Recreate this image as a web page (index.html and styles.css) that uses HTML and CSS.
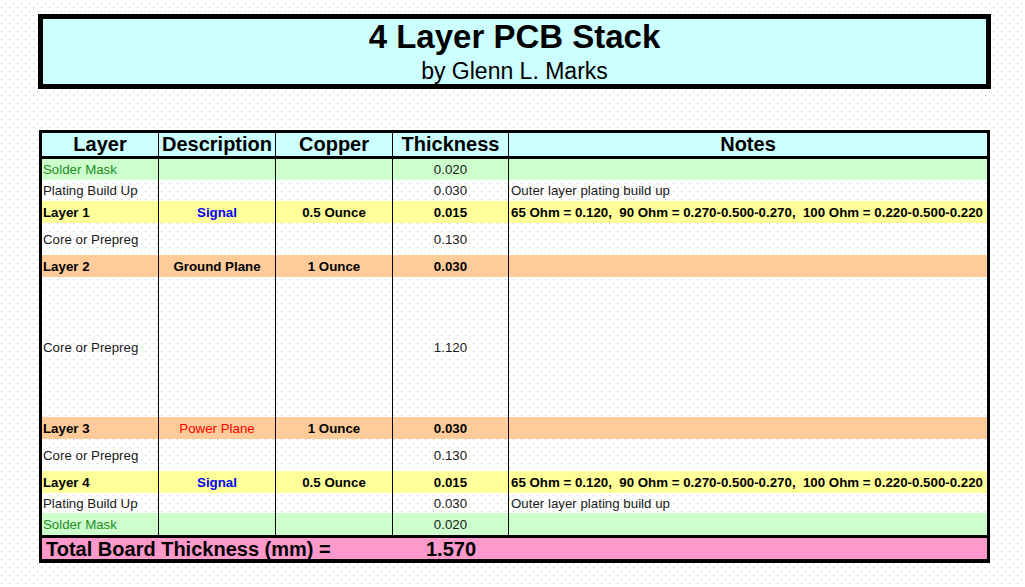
FILE: index.html
```html
<!DOCTYPE html>
<html lang="en">
<head>
<meta charset="utf-8">
<title>4 Layer PCB Stack</title>
<link rel="stylesheet" href="styles.css">
</head>
<body>
<div class="title-box">
  <h1 class="title">4 Layer PCB Stack</h1>
  <p class="subtitle">by Glenn L. Marks</p>
</div>

<div class="stack">
  <div class="row head">
    <div class="cell c">Layer</div>
    <div class="cell c">Description</div>
    <div class="cell c">Copper</div>
    <div class="cell c">Thickness</div>
    <div class="cell c last">Notes</div>
  </div>

  <div class="row green h21">
    <div class="cell mask">Solder Mask</div>
    <div class="cell"></div>
    <div class="cell"></div>
    <div class="cell c">0.020</div>
    <div class="cell last"></div>
  </div>

  <div class="row h21">
    <div class="cell">Plating Build Up</div>
    <div class="cell"></div>
    <div class="cell"></div>
    <div class="cell c">0.030</div>
    <div class="cell last note">Outer layer plating build up</div>
  </div>

  <div class="row yellow h22 bold">
    <div class="cell">Layer 1</div>
    <div class="cell c blue">Signal</div>
    <div class="cell c">0.5 Ounce</div>
    <div class="cell c">0.015</div>
    <div class="cell last note">65 Ohm = 0.120,  90 Ohm = 0.270-0.500-0.270,  100 Ohm = 0.220-0.500-0.220</div>
  </div>

  <div class="row h32">
    <div class="cell">Core or Prepreg</div>
    <div class="cell"></div>
    <div class="cell"></div>
    <div class="cell c">0.130</div>
    <div class="cell last"></div>
  </div>

  <div class="row orange h22 bold">
    <div class="cell">Layer 2</div>
    <div class="cell c">Ground Plane</div>
    <div class="cell c">1 Ounce</div>
    <div class="cell c">0.030</div>
    <div class="cell last"></div>
  </div>

  <div class="row h140">
    <div class="cell">Core or Prepreg</div>
    <div class="cell"></div>
    <div class="cell"></div>
    <div class="cell c">1.120</div>
    <div class="cell last"></div>
  </div>

  <div class="row orange h22 bold">
    <div class="cell">Layer 3</div>
    <div class="cell c red">Power Plane</div>
    <div class="cell c">1 Ounce</div>
    <div class="cell c">0.030</div>
    <div class="cell last"></div>
  </div>

  <div class="row h32">
    <div class="cell">Core or Prepreg</div>
    <div class="cell"></div>
    <div class="cell"></div>
    <div class="cell c">0.130</div>
    <div class="cell last"></div>
  </div>

  <div class="row yellow h22 bold">
    <div class="cell">Layer 4</div>
    <div class="cell c blue">Signal</div>
    <div class="cell c">0.5 Ounce</div>
    <div class="cell c">0.015</div>
    <div class="cell last note">65 Ohm = 0.120,  90 Ohm = 0.270-0.500-0.270,  100 Ohm = 0.220-0.500-0.220</div>
  </div>

  <div class="row h20">
    <div class="cell">Plating Build Up</div>
    <div class="cell"></div>
    <div class="cell"></div>
    <div class="cell c">0.030</div>
    <div class="cell last note">Outer layer plating build up</div>
  </div>

  <div class="row green h22">
    <div class="cell mask">Solder Mask</div>
    <div class="cell"></div>
    <div class="cell"></div>
    <div class="cell c">0.020</div>
    <div class="cell last"></div>
  </div>

  <div class="row total">
    <div class="cell total-label">Total Board Thickness (mm) =</div>
    <div class="cell c total-value">1.570</div>
    <div class="cell last"></div>
  </div>
</div>
</body>
</html>
```

FILE: styles.css
```css
html {
  background-color: #ffffff;
  background-image:
    conic-gradient(at 1px 1px, transparent 0 270deg, #c4c4c4 270deg),
    conic-gradient(at 1px 1px, transparent 0 270deg, #c4c4c4 270deg);
  background-size: 8px 8px, 8px 8px;
  background-position: 5px 3px, 1px 7px;
}

body {
  margin: 0;
  padding: 14px 0 0 38px;
  font-family: "Liberation Sans", Arial, sans-serif;
  color: #1a1a1a;
}

.title-box {
  box-sizing: border-box;
  width: 953px;
  height: 75px;
  border: 5px solid #000;
  background: #ccffff;
  display: flex;
  flex-direction: column;
  align-items: center;
}

.title {
  margin: -1px 0 0;
  font-size: 33px;
  line-height: 38px;
  font-weight: bold;
  color: #000;
}

.subtitle {
  margin: 2px 0 0;
  font-size: 23px;
  line-height: 26px;
  color: #000;
}

.stack {
  box-sizing: border-box;
  width: 951px;
  margin: 41px 0 0 1px;
  border: 3px solid #000;
  border-bottom-width: 4px;
}

.row {
  display: grid;
  grid-template-columns: 117px 117px 117px 116px 1fr;
  font-size: 13.3px;
}

.cell {
  box-sizing: border-box;
  display: flex;
  align-items: center;
  padding: 0 0 0 1px;
  border-right: 1px solid #000;
  white-space: pre;
  overflow: visible;
}

.cell.last {
  border-right: none;
}

.cell.c {
  justify-content: center;
  padding: 0;
}

.cell.note {
  padding-left: 2px;
}

.head {
  height: 23px;
  background: #ccffff;
  border-bottom: 3px solid #000;
  font-size: 20px;
  font-weight: bold;
  color: #000;
}

.h20 { height: 20px; }
.h21 { height: 21px; }
.h22 { height: 22px; }
.h32 { height: 32px; }
.h140 { height: 140px; }

.green { background: #ccffcc; }
.yellow { background: #ffff99; }
.orange { background: #ffcc99; }

.bold {
  font-weight: bold;
  color: #000;
}

.mask { color: #228b22; }
.blue { color: #0000ff; }
.red {
  color: #ff0000;
  font-weight: normal;
}

.total {
  grid-template-columns: 351px 116px 1fr;
  height: 21px;
  background: #ff99cc;
  border-top: 3px solid #000;
  font-size: 20px;
  font-weight: bold;
  color: #000;
}

.total .cell {
  border-right: none;
}

.total-label {
  padding-left: 4px;
}
```
